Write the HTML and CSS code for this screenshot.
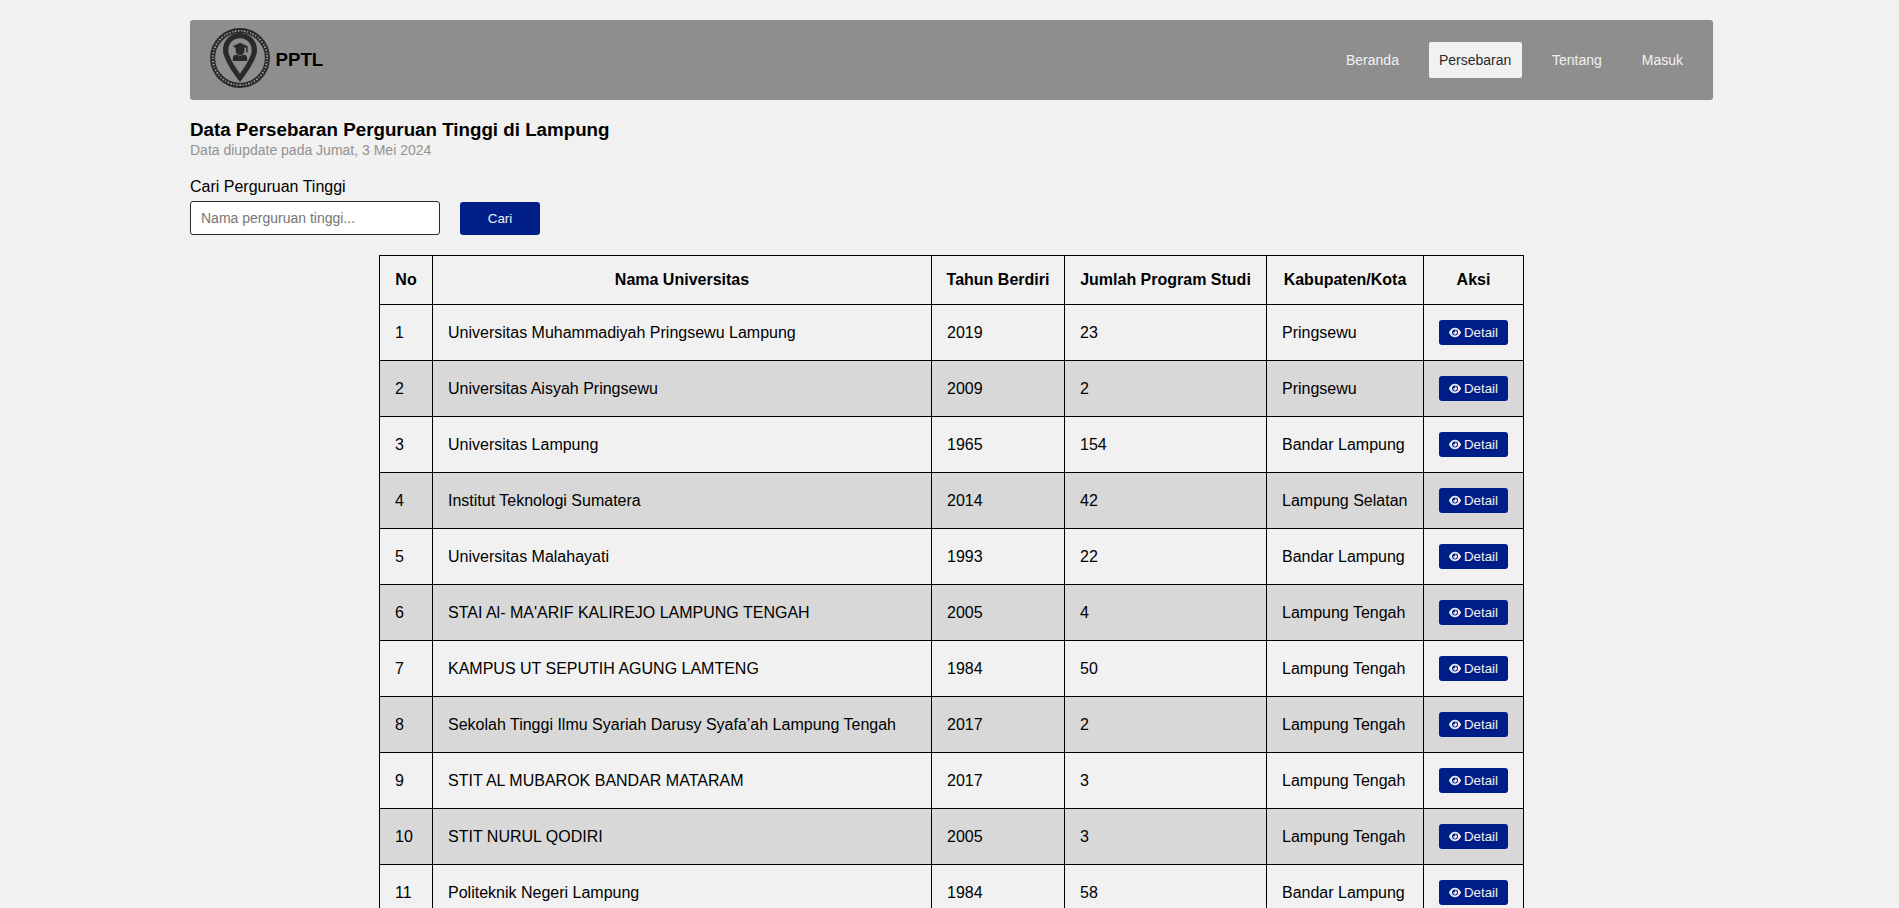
FILE: index.html
```html
<!DOCTYPE html>
<html lang="id">
<head>
<meta charset="utf-8">
<title>PPTL - Persebaran</title>
<link rel="stylesheet" href="styles.css">
</head>
<body>
<svg class="sprite" aria-hidden="true">
  <symbol id="eye" viewBox="0 0 576 512">
    <path fill="currentColor" fill-rule="evenodd" d="M288 32c-81 0-146 37-193 80C48 156 17 208 2 244c-3 8-3 17 0 24 15 36 46 88 93 132 47 43 112 80 193 80s146-37 193-80c47-44 78-96 93-132 3-7 3-16 0-24-15-36-46-88-93-132-47-43-112-80-193-80zM144 256a144 144 0 1 1 288 0 144 144 0 1 1-288 0zm144-64c0 35-29 64-64 64-7 0-14-1-20-3-6-2-12 2-12 7 0 7 1 14 3 21 14 51 66 82 118 68s82-66 68-118c-11-41-46-68-86-71-5 0-9 5-7 11 2 7 0 14 0 21z"/>
  </symbol>
</svg>
<div class="page">
  <header class="navbar">
    <a class="brand">
      <svg class="logo" viewBox="0 0 60 60">
        <circle cx="30" cy="30" r="27.4" fill="none" stroke="#2a2a2a" stroke-width="5"/>
        <circle cx="30" cy="30" r="27.2" fill="none" stroke="#a8a8a8" stroke-width="1.7" stroke-dasharray="1.3 1.9 1 1.5 1.6 1.7"/>
        <path fill="#2a2a2a" fill-rule="evenodd" d="M30 5C20 5 13 12.500 13 22c0 8.600 9.400 22.300 17 32 7.600-9.700 17-23.400 17-32C47 12.500 40 5 30 5zM30 10.200c7 0 11.700 5.200 11.700 11.900 0 6-6 15.900-11.700 23.600-5.700-7.700-11.700-17.600-11.700-23.600C18.300 15.400 23 10.200 30 10.200z"/>
        <path fill="#2a2a2a" d="M22.800 18.200 30 14.700l7.700 3.500v6.200h-1.500v-5.200l-1.700.8v2.400c0 2.600-1.500 4.500-4.400 4.500s-4.500-1.900-4.500-4.500v-2.500z"/>
        <path fill="#2a2a2a" d="M22.900 33v-3.400c0-1.900 1.500-2.800 3.400-2.800l3.700 1 3.800-1c1.900 0 3.300.9 3.300 2.800V33z"/>
      </svg>
      <span class="brand-name">PPTL</span>
    </a>
    <nav class="menu">
      <a>Beranda</a>
      <a class="active">Persebaran</a>
      <a>Tentang</a>
      <a>Masuk</a>
    </nav>
  </header>

  <h1 class="title">Data Persebaran Perguruan Tinggi di Lampung</h1>
  <p class="updated">Data diupdate pada Jumat, 3 Mei 2024</p>

  <form class="search">
    <div class="field">
      <label for="nama">Cari Perguruan Tinggi</label>
      <input id="nama" type="text" placeholder="Nama perguruan tinggi...">
    </div>
    <button class="btn btn-search" type="button">Cari</button>
  </form>

  <table class="data">
    <thead>
      <tr><th class="col-no">No</th><th class="col-name">Nama Universitas</th><th class="col-year">Tahun Berdiri</th><th class="col-count">Jumlah Program Studi</th><th class="col-city">Kabupaten/Kota</th><th class="col-action">Aksi</th></tr>
    </thead>
    <tbody>
      <tr><td>1</td><td>Universitas Muhammadiyah Pringsewu Lampung</td><td>2019</td><td>23</td><td>Pringsewu</td><td><button class="btn"><svg><use href="#eye"/></svg>Detail</button></td></tr>
      <tr><td>2</td><td>Universitas Aisyah Pringsewu</td><td>2009</td><td>2</td><td>Pringsewu</td><td><button class="btn"><svg><use href="#eye"/></svg>Detail</button></td></tr>
      <tr><td>3</td><td>Universitas Lampung</td><td>1965</td><td>154</td><td>Bandar Lampung</td><td><button class="btn"><svg><use href="#eye"/></svg>Detail</button></td></tr>
      <tr><td>4</td><td>Institut Teknologi Sumatera</td><td>2014</td><td>42</td><td>Lampung Selatan</td><td><button class="btn"><svg><use href="#eye"/></svg>Detail</button></td></tr>
      <tr><td>5</td><td>Universitas Malahayati</td><td>1993</td><td>22</td><td>Bandar Lampung</td><td><button class="btn"><svg><use href="#eye"/></svg>Detail</button></td></tr>
      <tr><td>6</td><td>STAI Al- MA'ARIF KALIREJO LAMPUNG TENGAH</td><td>2005</td><td>4</td><td>Lampung Tengah</td><td><button class="btn"><svg><use href="#eye"/></svg>Detail</button></td></tr>
      <tr><td>7</td><td>KAMPUS UT SEPUTIH AGUNG LAMTENG</td><td>1984</td><td>50</td><td>Lampung Tengah</td><td><button class="btn"><svg><use href="#eye"/></svg>Detail</button></td></tr>
      <tr><td>8</td><td>Sekolah Tinggi Ilmu Syariah Darusy Syafa’ah Lampung Tengah</td><td>2017</td><td>2</td><td>Lampung Tengah</td><td><button class="btn"><svg><use href="#eye"/></svg>Detail</button></td></tr>
      <tr><td>9</td><td>STIT AL MUBAROK BANDAR MATARAM</td><td>2017</td><td>3</td><td>Lampung Tengah</td><td><button class="btn"><svg><use href="#eye"/></svg>Detail</button></td></tr>
      <tr><td>10</td><td>STIT NURUL QODIRI</td><td>2005</td><td>3</td><td>Lampung Tengah</td><td><button class="btn"><svg><use href="#eye"/></svg>Detail</button></td></tr>
      <tr><td>11</td><td>Politeknik Negeri Lampung</td><td>1984</td><td>58</td><td>Bandar Lampung</td><td><button class="btn"><svg><use href="#eye"/></svg>Detail</button></td></tr>
    </tbody>
  </table>
</div>
</body>
</html>
```
FILE: styles.css
```css
* {
  box-sizing: border-box;
  margin: 0;
  padding: 0;
  font-family: "Liberation Sans", Arial, sans-serif;
}

html {
  height: 100%;
  overflow: hidden;
}

body {
  height: 100%;
  overflow: hidden;
  background: #f1f1f1;
  color: #000;
  font-size: 16px;
}

.sprite {
  display: none;
}

.page {
  width: 1523px;
  margin-left: 190px;
  padding-top: 20px;
}

.navbar {
  display: flex;
  align-items: center;
  justify-content: space-between;
  height: 80px;
  padding: 0 20px;
  border-radius: 3px;
  background: #8e8e8e;
}

.brand {
  display: flex;
  align-items: center;
  gap: 5.5px;
}

.logo {
  width: 60px;
  height: 60px;
  margin-bottom: 4px;
}

.brand-name {
  font-size: 18.72px;
  font-weight: bold;
}

.menu {
  display: flex;
  gap: 20px;
}

.menu a {
  padding: 10px;
  border-radius: 2px;
  color: #f1f1f1;
  font-size: 14px;
  line-height: 16px;
}

.menu .active {
  width: 93px;
  background: #f1f1f1;
  color: #2a2a2a;
}

.title {
  margin-top: 19px;
  font-size: 18.75px;
  line-height: 22px;
}

.updated {
  margin-top: 1px;
  color: #929292;
  font-size: 14px;
  line-height: 16px;
}

.search {
  display: flex;
  align-items: flex-end;
  gap: 20px;
  margin-top: 19px;
}

.field {
  display: flex;
  flex-direction: column;
  gap: 5px;
}

.field label {
  line-height: 19px;
}

.field input {
  width: 250px;
  height: 34px;
  padding: 0 10px;
  border: 1px solid #2a2a2a;
  border-radius: 3px;
  background: #fff;
  font-size: 14px;
}

.field input::placeholder {
  color: #757575;
}

.btn {
  display: flex;
  align-items: center;
  justify-content: center;
  gap: 3px;
  width: 69px;
  height: 25px;
  border: 0;
  border-radius: 3px;
  background: #001e87;
  color: #f1f1f1;
  font-size: 13.333px;
}

.btn svg {
  width: 12px;
  height: 11px;
}

.btn-search {
  width: 80px;
  height: 33px;
}

.data {
  width: 1145px;
  margin: 20px auto 0;
  border-collapse: collapse;
  table-layout: fixed;
}

.data th,
.data td {
  padding: 15px 0 15px 15px;
  border: 1px solid #000;
  white-space: nowrap;
}

.data th {
  padding: 15px 0;
}

.col-no {
  width: 53px;
}

.col-name {
  width: 499px;
}

.col-year {
  width: 133px;
}

.col-count {
  width: 202px;
}

.col-city {
  width: 157px;
}

.data tbody tr:nth-child(even) {
  background: #d8d8d8;
}
```
